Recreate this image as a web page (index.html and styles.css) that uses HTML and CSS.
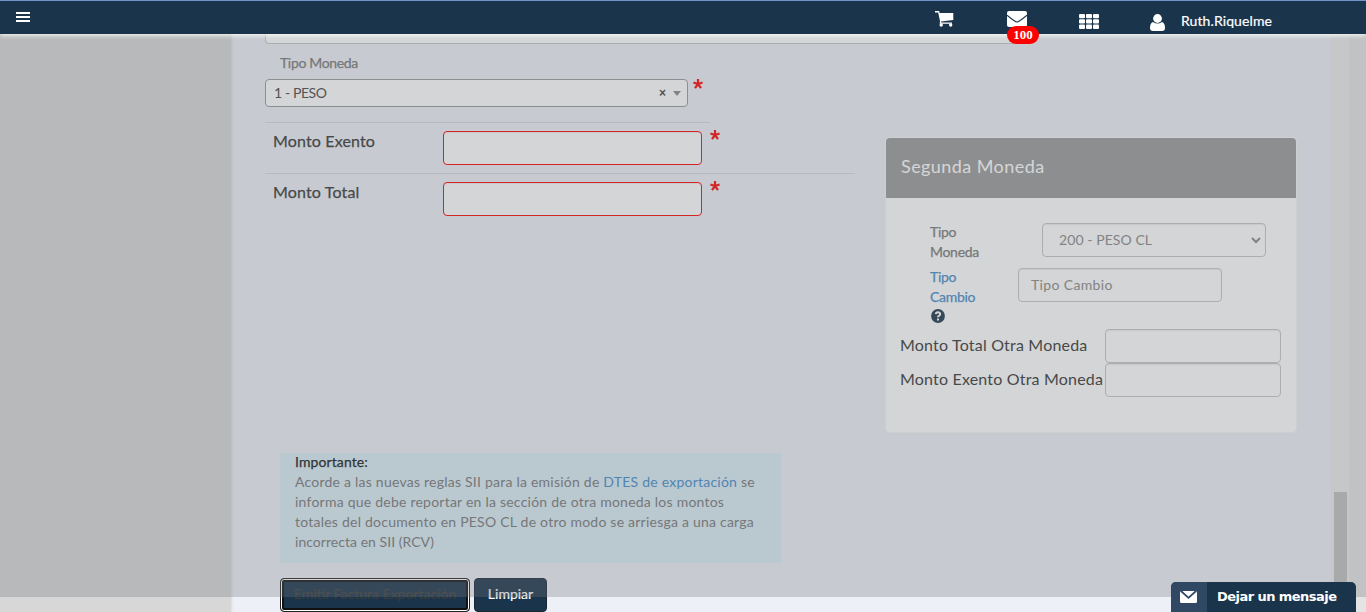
FILE: index.html
```html
<!DOCTYPE html>
<html lang="es">
<head>
<meta charset="utf-8">
<title>Factura de Exportación</title>
<link rel="stylesheet" href="styles.css">
</head>
<body>
<header class="topbar">
  <svg class="menu" width="14" height="11" viewBox="0 0 14 11"><path d="M0 1h14M0 5h14M0 9h14" stroke="#fff" stroke-width="2"/></svg>
  <svg class="cart" width="19" height="16" viewBox="0 0 19 16"><path d="M0 0h3.500q.7 0 .9.8l.2 1.200H18.300v7L6 10.400l.2 1H17v1.400H5.200q-.7 0-.6-.8l.5-1.600L3.200 1.500H0z" fill="#fff"/><circle cx="6.200" cy="14" r="1.700" fill="#fff"/><circle cx="15.700" cy="14" r="1.700" fill="#fff"/></svg>
  <div class="mail">
    <svg width="20" height="16" viewBox="0 0 20 16"><rect width="20" height="16" rx="2" fill="#fff"/><path d="M0 4.200C4 7.500 8.400 11 10 11s6-3.500 10-6.800" fill="none" stroke="#1a344c" stroke-width="1.100"/></svg>
    <span class="count">100</span>
  </div>
  <svg class="grid" width="20" height="15" viewBox="0 0 20 15"><g fill="#fff"><rect width="6" height="4.300" rx="1"/><rect x="7" width="6" height="4.300" rx="1"/><rect x="14" width="6" height="4.300" rx="1"/><rect y="5.300" width="6" height="4.300" rx="1"/><rect x="7" y="5.300" width="6" height="4.300" rx="1"/><rect x="14" y="5.300" width="6" height="4.300" rx="1"/><rect y="10.600" width="6" height="4.300" rx="1"/><rect x="7" y="10.600" width="6" height="4.300" rx="1"/><rect x="14" y="10.600" width="6" height="4.300" rx="1"/></g></svg>
  <svg class="person" width="15" height="17" viewBox="0 0 15 17"><path d="M3 8Q0 9 0 14q0 3 3 3h9q3 0 3-3 0-5-3-6-4.500 3-9 0z" fill="#fff"/><circle cx="7.500" cy="4.500" r="4.400" fill="#fff"/></svg>
  <span class="user">Ruth.Riquelme</span>
</header>
<div class="page">
  <aside class="sidebar"></aside>
  <main class="content">
    <section class="form">
      <div class="cut-input"></div>
      <div class="small-label"><span>Tipo Moneda</span></div>
      <div class="row">
        <div class="select2"><span>1 - PESO</span><span class="clear">×</span><i class="caret"></i></div>
        <svg class="star" width="10" height="10" viewBox="0 0 10 10"><path d="M5 5V0M5 5L.4 3.500M5 5l4.600-1.500M5 5L2 9.200M5 5l3 4.200" stroke="#f00" stroke-width="2.200"/></svg>
      </div>
      <div class="amount short">
        <label><span>Monto Exento</span></label><input class="required" type="text">
        <svg class="star" width="10" height="10" viewBox="0 0 10 10"><path d="M5 5V0M5 5L.4 3.500M5 5l4.600-1.500M5 5L2 9.200M5 5l3 4.200" stroke="#f00" stroke-width="2.200"/></svg>
      </div>
      <div class="amount">
        <label><span>Monto Total</span></label><input class="required" type="text">
        <svg class="star" width="10" height="10" viewBox="0 0 10 10"><path d="M5 5V0M5 5L.4 3.500M5 5l4.600-1.500M5 5L2 9.200M5 5l3 4.200" stroke="#f00" stroke-width="2.200"/></svg>
      </div>
      <div class="notice">
        <p><strong>Importante:</strong><br>
        <span>Acorde a las nuevas reglas SII para la emisión de <a>DTES de exportación</a> se</span><br>
        <span>informa que debe reportar en la sección de otra moneda los montos</span><br>
        <span>totales del documento en PESO CL de otro modo se arriesga a una carga</span><br>
        <span class="last">incorrecta en SII (RCV)</span></p>
      </div>
      <div class="buttons">
        <button class="btn emit"><span>Emitir Factura Exportación</span></button>
        <button class="btn reset"><span>Limpiar</span></button>
      </div>
    </section>
    <section class="card">
      <h2><span>Segunda Moneda</span></h2>
      <div class="card-body">
        <div class="pair first">
          <div class="pair-label"><span>Tipo</span><br><span>Moneda</span></div>
          <div class="field currency"><span>200 - PESO CL</span><svg width="10" height="7" viewBox="0 0 10 7"><path d="M1 1l4 4 4-4" fill="none" stroke="#888" stroke-width="2"/></svg></div>
        </div>
        <div class="pair second">
          <div class="pair-label link"><span>Tipo</span><br><span>Cambio</span>
            <svg width="14" height="14" viewBox="0 0 14 14"><circle cx="7" cy="7" r="6.900" fill="#1a344c"/><path d="M4.700 5.200Q5 3.300 7 3.300t2.200 1.800Q9.200 6.200 8 6.800T7 8.300" fill="none" stroke="#fff" stroke-width="1.900"/><path d="M6 9.500h2v1.900H6z" fill="#fff"/></svg>
          </div>
          <div class="field rate"><span>Tipo Cambio</span></div>
        </div>
        <div class="other"><span>Monto Total Otra Moneda</span><input type="text"></div>
        <div class="other"><span>Monto Exento Otra Moneda</span><input type="text"></div>
      </div>
    </section>
  </main>
  <div class="scroll"><div class="thumb"></div></div>
  <div class="edge"></div>
</div>
<div class="backdrop"></div>
<div class="chat">
  <div class="chat-icon"><svg width="17" height="12" viewBox="0 0 17 12"><rect width="17" height="12" rx="1.500" fill="#fff"/><path d="M1 0l7.500 6.800L16 0" fill="none" stroke="#304863" stroke-width="1.800"/></svg></div>
  <span>Dejar un mensaje</span>
</div>
</body>
</html>
```
FILE: styles.css
```css
* { box-sizing: border-box; }
body { margin: 0; height: 612px; overflow: hidden; font: 14px/20px Lato, "Open Sans", sans-serif; color: #777; background: #edf0f6; }
svg { display: block; flex: none; }
span { white-space: nowrap; }
.topbar { position: relative; z-index: 3; height: 34px; display: flex; align-items: flex-start; padding-left: 16px; background: #1a344c; border-top: 1px solid #7393c8; box-shadow: 0 1px 5px #fff; }
.menu { margin-top: 11px; }
.cart { margin: 10px 0 0 905px; }
.mail { position: relative; margin: 10px 0 0 53px; }
.count { position: absolute; left: 0; top: 15px; width: 32px; height: 18px; border-radius: 9px; background: #f00; color: #fff; font: bold 13px/18px "Liberation Serif", serif; text-align: center; }
.grid { margin: 13px 0 0 52px; }
.person { margin: 13px 0 0 51px; }
.user { margin: 10px 0 0 16px; color: #fff; letter-spacing: .1px; -webkit-text-stroke: .2px #fff; }
.page { display: flex; height: 578px; }
.sidebar { width: 231px; margin-right: 1px; flex: none; background: #d7d7d7; box-shadow: 0 0 3px #c5c8cc; }
.content { flex: 1; display: flex; align-items: flex-start; padding-left: 33px; }
.form { width: 590px; }
.cut-input { width: 755px; height: 10px; border: 1px solid #c3c5c7; border-top: 0; border-radius: 0 0 4px 4px; background: #fff; }
.small-label { padding: 9px 0 0 15px; height: 35px; letter-spacing: -.35px; -webkit-text-stroke: .25px; }
.row { display: flex; height: 43px; }
.select2 { display: flex; align-items: center; width: 423px; height: 28px; border: 1px solid #999; border-radius: 4px; background: #fff; color: #444; padding: 0 6px 0 8px; letter-spacing: -.4px; }
.clear { margin-left: auto; font: bold 12px/26px "Liberation Sans", sans-serif; letter-spacing: 0; }
.caret { margin-left: 7px; border: 4px solid transparent; border-top: 5px solid #888; border-bottom: 0; }
.row .star { margin-left: 5px; }
.amount { display: flex; height: 51px; padding: 8px 0 0 8px; border-top: 1px solid #d5d9db; }
.amount.short { border-image: linear-gradient(90deg, #d5d9db 444px, transparent 444px) 1; }
.amount label { width: 170px; font-size: 16px; color: #333; letter-spacing: .15px; -webkit-text-stroke: .25px; }
input { appearance: none; border: 1px solid #c6c8ca; border-radius: 4px; background: #fff; outline: 0; box-shadow: inset 0 1px 1px rgba(0,0,0,.075); }
.required { width: 259px; height: 34px; border-color: #f00; }
.amount .star { margin: -1px 0 0 8px; }
.notice { width: 501px; height: 110px; margin: 229px 0 0 15px; padding-left: 15px; background: #d9edf7; overflow: hidden; }
.notice p { margin: -1px 0 0; letter-spacing: .23px; }
.notice strong { color: #111; font-weight: 400; letter-spacing: .1px; -webkit-text-stroke: .25px; }
.notice a { color: #428bca; }
.notice .last { letter-spacing: .04px; }
.buttons { display: flex; gap: 4px; margin: 15px 0 0 15px; }
.btn { height: 34px; padding: 0 0 2px; border: 1px solid #1a2733; border-radius: 4px; background: #1a344c; color: #fff; font: inherit; -webkit-text-stroke: .2px; }
.emit { width: 190px; border: 1px solid #222; box-shadow: inset 0 0 0 1px #fff, inset 0 0 0 3px #111; color: #3c3c3c; }
.reset { width: 73px; }
.card { width: 412px; height: 296px; margin: 103px 0 0 30px; border: 1px solid #f6f7f8; border-radius: 5px; background: #fff; overflow: hidden; }
.card h2 { height: 60px; margin: 0; padding: 0 15px; background: #999; color: #fff; font: 18px/57px Lato, sans-serif; letter-spacing: .43px; }
.card-body { padding: 25px 15px 0 14px; }
.pair { display: flex; padding-left: 30px; }
.pair-label { position: relative; top: -1px; letter-spacing: -.3px; -webkit-text-stroke: .25px; }
.link { color: #428bca; }
.pair-label svg { margin: 2px 0 0 1px; }
.first { height: 45px; }
.second { height: 61px; }
.first .pair-label { width: 112px; }
.second .pair-label { width: 88px; }
.field { display: flex; align-items: center; height: 34px; border: 1px solid #c6c8ca; border-radius: 4px; color: #888; box-shadow: inset 0 1px 1px rgba(0,0,0,.075); }
.currency { width: 224px; justify-content: space-between; padding: 0 4px 0 16px; letter-spacing: .07px; }
.rate { width: 204px; padding-left: 12px; letter-spacing: .35px; }
.other { display: flex; justify-content: space-between; height: 34px; font-size: 16px; line-height: 32px; color: #333; letter-spacing: .19px; }
.other input { width: 176px; flex: none; }
.scroll { width: 18px; background: #ebebeb; padding: 458px 2px 0 3px; }
.thumb { height: 120px; background: #c0c0c0; }
.edge { width: 17px; background: #e4e4e4; }
.backdrop { position: absolute; z-index: 2; left: 0; top: 34px; width: 1366px; height: 563px; background: rgba(115,121,124,.31); }
.chat { position: absolute; z-index: 4; left: 1171px; top: 582px; display: flex; width: 185px; height: 30px; border-radius: 5px 5px 0 0; overflow: hidden; background: #1a344c; color: #fff; font: bold 13px/29px "DejaVu Sans", sans-serif; letter-spacing: -.55px; }
.chat-icon { width: 36px; padding: 9px; background: #304863; }
.chat > span { margin-left: 10px; }
```
